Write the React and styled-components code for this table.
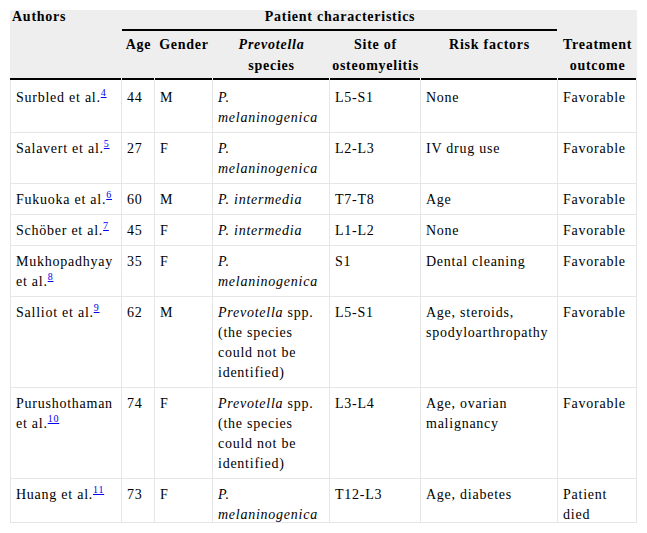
import React from "react";
import styled, { createGlobalStyle } from "styled-components";

const GlobalStyle = createGlobalStyle`
  html, body { margin: 0; padding: 0; background: #fff; }
  body {
    font-family: "Liberation Serif", "Times New Roman", serif;
    color: #000;
  }
`;

const Page = styled.div`
  padding: 10px;
`;

const Frame = styled.div`
  width: 627px;
  max-height: 512px;
  overflow: hidden;
  border-bottom: 1px solid #e6e6e6;
`;

const Table = styled.table`
  width: 627px;
  table-layout: fixed;
  border-collapse: separate;
  border-spacing: 0;
  font-family: "Liberation Serif", "Times New Roman", serif;
  font-size: 14px;
  letter-spacing: 0.75px;
`;

const Th = styled.th`
  background: ${(p) =>
    p.$rule
      ? "linear-gradient(#000, #000) left bottom / calc(100% - 1px) 2px no-repeat, #eeeeee"
      : "#eeeeee"};
  font-weight: bold;
  padding: ${(p) => (p.$top ? "0 2px 7px" : "3px 2px 4px")};
  line-height: ${(p) => (p.$top ? "14px" : "21px")};
  text-align: ${(p) => p.$align || "center"};
  vertical-align: ${(p) => p.$valign || "top"};
`;

const Td = styled.td`
  padding: 6px 5px 4px;
  line-height: 20px;
  vertical-align: top;
  text-align: left;
  border-right: 1px solid #e6e6e6;
  border-bottom: 1px solid #e6e6e6;
  &:first-child {
    border-left: 1px solid #e6e6e6;
  }
  tr:first-child > & {
    padding-top: 8px;
  }
`;

const Em = styled.i`
  font-style: italic;
`;

const Ref = styled.sup`
  font-size: 10px;
  line-height: 0;
  vertical-align: 6px;
  a {
    color: #0000ee;
    text-decoration: underline;
  }
`;

const widths = [112, 33, 58, 117, 91, 137, 79];

const rows = [
  { author: "Surbled et al.", ref: "4", age: "44", gender: "M", species: <Em>P. melaninogenica</Em>, site: "L5-S1", risk: "None", outcome: "Favorable" },
  { author: "Salavert et al.", ref: "5", age: "27", gender: "F", species: <Em>P. melaninogenica</Em>, site: "L2-L3", risk: "IV drug use", outcome: "Favorable" },
  { author: "Fukuoka et al.", ref: "6", age: "60", gender: "M", species: <Em>P. intermedia</Em>, site: "T7-T8", risk: "Age", outcome: "Favorable" },
  { author: "Schöber et al.", ref: "7", age: "45", gender: "F", species: <Em>P. intermedia</Em>, site: "L1-L2", risk: "None", outcome: "Favorable" },
  { author: "Mukhopadhyay et al.", ref: "8", age: "35", gender: "F", species: <Em>P. melaninogenica</Em>, site: "S1", risk: "Dental cleaning", outcome: "Favorable" },
  { author: "Salliot et al.", ref: "9", age: "62", gender: "M", species: <><Em>Prevotella</Em> spp. (the species could not be identified)</>, site: "L5-S1", risk: "Age, steroids, spodyloarthropathy", outcome: "Favorable" },
  { author: "Purushothaman et al.", ref: "10", age: "74", gender: "F", species: <><Em>Prevotella</Em> spp. (the species could not be identified)</>, site: "L3-L4", risk: "Age, ovarian malignancy", outcome: "Favorable" },
  { author: "Huang et al.", ref: "11", age: "73", gender: "F", species: <Em>P. melaninogenica</Em>, site: "T12-L3", risk: "Age, diabetes", outcome: "Patient died" },
];

export default function App() {
  return (
    <>
      <GlobalStyle />
      <Page>
        <Frame>
          <Table>
            <colgroup>
              {widths.map((w, i) => (
                <col key={i} style={{ width: w }} />
              ))}
            </colgroup>
            <thead>
              <tr>
                <Th $top $align="left" rowSpan={2} $rule>
                  Authors
                </Th>
                <Th $top colSpan={5} $rule>
                  Patient characteristics
                </Th>
                <Th rowSpan={2} $valign="bottom" $rule>
                  Treatment
                  <br />
                  outcome
                </Th>
              </tr>
              <tr>
                <Th $rule>Age</Th>
                <Th $rule>Gender</Th>
                <Th $rule>
                  <Em>Prevotella</Em>
                  <br />
                  species
                </Th>
                <Th $rule>
                  Site of
                  <br />
                  osteomyelitis
                </Th>
                <Th $rule>Risk factors</Th>
              </tr>
            </thead>
            <tbody>
              {rows.map((r) => (
                <tr key={r.ref}>
                  <Td>
                    {r.author}
                    <Ref>
                      <a href="#">{r.ref}</a>
                    </Ref>
                  </Td>
                  <Td>{r.age}</Td>
                  <Td>{r.gender}</Td>
                  <Td>{r.species}</Td>
                  <Td>{r.site}</Td>
                  <Td>{r.risk}</Td>
                  <Td>{r.outcome}</Td>
                </tr>
              ))}
            </tbody>
          </Table>
        </Frame>
      </Page>
    </>
  );
}
